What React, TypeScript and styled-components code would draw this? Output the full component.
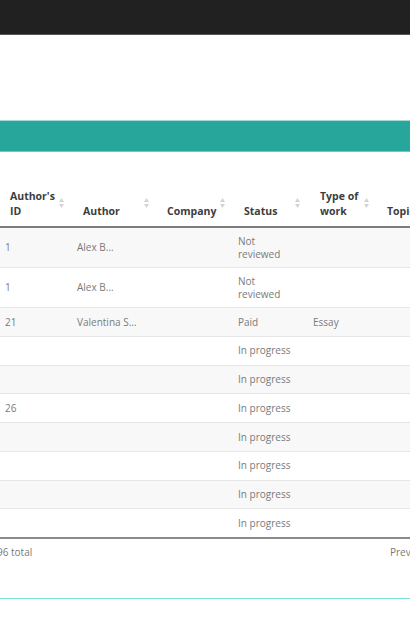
import React from "react";
import styled, { createGlobalStyle } from "styled-components";

const Global = createGlobalStyle`
  html, body { margin: 0; padding: 0; background: #fff; }
  body { font-family: "Open Sans", "DejaVu Sans", sans-serif; }
  * { box-sizing: border-box; }
`;

const Page = styled.div`
  width: 410px;
  height: 625px;
  overflow: hidden;
  display: flex;
  flex-direction: column;
`;

const TopBar = styled.header`
  height: 35px;
  flex: none;
  background: #212121;
  border-bottom: 1.5px solid #575757;
`;

const Spacer = styled.div`
  height: 85px;
  flex: none;
`;

const Band = styled.div`
  height: 32px;
  flex: none;
  background: #27a69b;
  border-top: 1px solid #a4dcd5;
  border-bottom: 1px solid #6ecac1;
`;

const Section = styled.section`
  padding-top: 28px;
  flex: none;
`;

const TableWrap = styled.div`
  width: 410px;
  overflow: hidden;
`;

const Table = styled.table`
  width: 720px;
  table-layout: fixed;
  border-collapse: collapse;
  border-bottom: 2px solid #8a8a8a;
`;

const HeadCell = styled.th<{ $pl?: number }>`
  position: relative;
  text-align: left;
  vertical-align: bottom;
  font-size: 10.5px;
  font-weight: 700;
  color: #3d3d3d;
  line-height: 15px;
  padding: 9px 16px 7px ${(p) => p.$pl ?? 10}px;
  border-bottom: 2px solid #7d7d7d;
`;

const SortIcon = styled.svg`
  position: absolute;
  right: 8px;
  top: 50%;
  transform: translateY(-50%);
  width: 5px;
  height: 10px;
`;

const Row = styled.tr<{ $odd: boolean }>`
  background: ${(p) => (p.$odd ? "#f8f8f8" : "#ffffff")};
  border-top: 1px solid #e6e6e6;
  &:first-child { border-top: none; }
`;

const Cell = styled.td`
  height: 28.75px;
  font-size: 10px;
  color: #7a7a7a;
  line-height: 12.5px;
  padding: 7px 15px 7px 5px;
  vertical-align: middle;
  white-space: normal;
`;

const Footer = styled.div`
  width: 450px;
  display: flex;
  padding-top: 7px;
  font-size: 10px;
  line-height: 13px;
  color: #7a7a7a;
`;

const Total = styled.span`
  flex: 1;
  margin-left: -3px;
`;

const Pager = styled.span`
  flex: none;
  width: 60px;
  white-space: nowrap;
`;

const Divider = styled.div`
  margin-top: 39px;
  height: 1px;
  background: #7fe2d9;
`;

const Sort = () => (
  <SortIcon viewBox="0 0 5 10">
    <path d="M2.5 0 L5 4 L0 4 Z" fill="#d4d4d4" />
    <path d="M0 6 L5 6 L2.5 10 Z" fill="#d4d4d4" />
  </SortIcon>
);

type R = { id: string; author: string; company: string; status: string; type: string };

const rows: R[] = [
  { id: "1", author: "Alex B...", company: "", status: "Not reviewed", type: "" },
  { id: "1", author: "Alex B...", company: "", status: "Not reviewed", type: "" },
  { id: "21", author: "Valentina S...", company: "", status: "Paid", type: "Essay" },
  { id: "", author: "", company: "", status: "In progress", type: "" },
  { id: "", author: "", company: "", status: "In progress", type: "" },
  { id: "26", author: "", company: "", status: "In progress", type: "" },
  { id: "", author: "", company: "", status: "In progress", type: "" },
  { id: "", author: "", company: "", status: "In progress", type: "" },
  { id: "", author: "", company: "", status: "In progress", type: "" },
  { id: "", author: "", company: "", status: "In progress", type: "" },
];

const widths = [72, 85, 76, 75, 69, 343];

export default function App() {
  return (
    <>
      <Global />
      <Page>
        <TopBar />
        <Spacer />
        <Band />
        <Section>
          <TableWrap>
            <Table>
              <colgroup>
                {widths.map((w, i) => (
                  <col key={i} style={{ width: w }} />
                ))}
              </colgroup>
              <thead>
                <tr>
                  <HeadCell>
                    Author's<br />ID
                    <Sort />
                  </HeadCell>
                  <HeadCell $pl={11}>
                    Author
                    <Sort />
                  </HeadCell>
                  <HeadCell>
                    Company
                    <Sort />
                  </HeadCell>
                  <HeadCell $pl={11}>
                    Status
                    <Sort />
                  </HeadCell>
                  <HeadCell $pl={12}>
                    Type of<br />work
                    <Sort />
                  </HeadCell>
                  <HeadCell>Topic</HeadCell>
                </tr>
              </thead>
              <tbody>
                {rows.map((r, i) => (
                  <Row key={i} $odd={i % 2 === 0}>
                    <Cell>{r.id}</Cell>
                    <Cell>{r.author}</Cell>
                    <Cell>{r.company}</Cell>
                    <Cell>{r.status}</Cell>
                    <Cell>{r.type}</Cell>
                    <Cell></Cell>
                  </Row>
                ))}
              </tbody>
            </Table>
          </TableWrap>
          <Footer>
            <Total>96 total</Total>
            <Pager>Prev</Pager>
          </Footer>
          <Divider />
        </Section>
      </Page>
    </>
  );
}
